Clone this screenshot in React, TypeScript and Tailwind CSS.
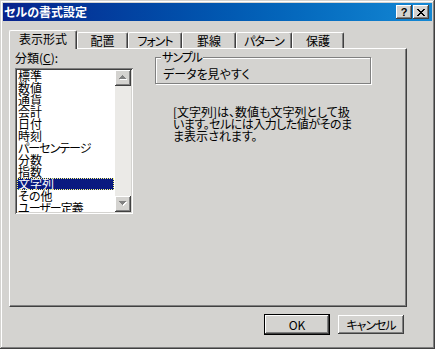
import React from "react";

const ITEMS = [
  { t: "標準" },
  { t: "数値" },
  { t: "通貨" },
  { t: "会計" },
  { t: "日付" },
  { t: "時刻" },
  { t: "パーセンテージ", kana: true },
  { t: "分数" },
  { t: "指数" },
  { t: "文字列" },
  { t: "その他" },
  { t: "ユーザー定義", kana: true },
];

const TABS = [
  { label: "表示形式", w: "w-[68px]" },
  { label: "配置", w: "w-[51px]" },
  { label: "フォント", w: "w-[54px]", kana: true },
  { label: "罫線", w: "w-[54px]" },
  { label: "パターン", w: "w-[56px]", kana: true },
  { label: "保護", w: "w-[52px]" },
];

const raised =
  "shadow-[inset_-1px_-1px_#404040,inset_1px_1px_#fff,inset_-2px_-2px_#808080]";

function Arrow({ up }: { up?: boolean }) {
  const rows = [1, 3, 5, 7];
  const rs = up ? rows : [...rows].reverse();
  return (
    <svg width="9" height="6" viewBox="0 0 9 6" shapeRendering="crispEdges">
      {rs.map((w, i) => (
        <rect key={"s" + i} x={(7 - w) / 2 + 1} y={i + 1} width={w} height={1} fill="#fff" />
      ))}
      {rs.map((w, i) => (
        <rect key={"g" + i} x={(7 - w) / 2} y={i} width={w} height={1} fill="#808080" />
      ))}
    </svg>
  );
}

function TitleButton({ children }: { children: React.ReactNode }) {
  return (
    <div className={`w-[16px] h-[14px] bg-[#d4d3d0] flex items-center justify-center ${raised}`}>
      {children}
    </div>
  );
}

export default function App() {
  return (
    <div className="w-[435px] h-[349px] bg-[#d4d3d0] flex flex-col text-[12px] leading-[12px] text-black font-['Noto_Sans_CJK_JP',sans-serif] [font-feature-settings:'palt'] shadow-[inset_-1px_-1px_#404040,inset_1px_1px_#d4d3d0,inset_-2px_-2px_#808080,inset_2px_2px_#fff]">
      {/* title bar */}
      <div className="mx-[3px] mt-[3px] h-[18px] bg-gradient-to-r from-[#08228c] to-[#1488d4] flex items-center pl-[1px] pr-[3px]">
        <span className="font-bold text-white text-[12px] leading-[12px]">セルの書式設定</span>
        <div className="ml-auto flex gap-[1px]">
          <TitleButton>
            <span className="font-['Liberation_Sans',sans-serif] font-bold text-[11px] leading-[11px]">?</span>
          </TitleButton>
          <TitleButton>
            <svg width="8" height="7" viewBox="0 0 8 7" shapeRendering="crispEdges">
              <path d="M0 0h2v1h-2zM6 0h2v1h-2zM1 1h2v1h-2zM5 1h2v1h-2zM2 2h4v1h-4zM3 3h2v1h-2zM2 4h4v1h-4zM1 5h2v1h-2zM5 5h2v1h-2zM0 6h2v1h-2zM6 6h2v1h-2z" fill="#000" />
            </svg>
          </TitleButton>
        </div>
      </div>

      {/* tabs */}
      <div className="ml-[9px] mt-[9px] h-[18px] flex items-end">
        {TABS.map((t, i) =>
          i === 0 ? (
            <div
              key={t.label}
              className={`${t.w} h-[19px] -mb-px relative z-10 bg-[#d4d3d0] border-l border-t border-r border-white border-r-[#404040] rounded-t-[2px] shadow-[inset_-1px_0_#808080] flex items-center justify-center pb-[2px]`}
            >
              {t.label}
            </div>
          ) : (
            <div
              key={t.label}
              className={`${t.w} h-[16px] bg-[#d4d3d0] border-l border-t border-r border-white border-r-[#404040] rounded-t-[2px] shadow-[inset_-1px_0_#808080] flex items-center justify-center pt-[1px] ${t.kana ? "tracking-[-1px]" : ""}`}
            >
              {t.label}
            </div>
          )
        )}
      </div>

      {/* panel */}
      <div className="ml-[9px] w-[398px] h-[259px] border-l border-t border-r border-b border-white border-r-[#404040] border-b-[#404040] shadow-[inset_-1px_-1px_#808080] flex">
        <div className="ml-[5px] mt-[3px] flex flex-col">
          <div className="h-[12px] whitespace-nowrap">
            分類(<span className="underline">C</span>):
          </div>
          <div className="mt-[4px] w-[118px] h-[146px] bg-white p-[2px] flex shadow-[inset_1px_1px_#808080,inset_-1px_-1px_#fff,inset_2px_2px_#404040,inset_-2px_-2px_#d4d3d0]">
            <div className="flex-1 overflow-hidden">
              {ITEMS.map((it) => (
                <div
                  key={it.t}
                  className={`h-[12px] pl-[1px] whitespace-nowrap ${it.kana ? "tracking-[-1px]" : ""} ${
                    it.t === "文字列"
                      ? "bg-[#0a1a80] text-white outline-dotted outline-1 -outline-offset-1 outline-[#ffff80] mr-[1px]"
                      : ""
                  }`}
                >
                  {it.t}
                </div>
              ))}
            </div>
            <div className="w-[16px] flex flex-col bg-[#ebeae7]">
              <div className={`h-[16px] bg-[#d4d3d0] flex items-center justify-center ${raised}`}>
                <Arrow up />
              </div>
              <div className="flex-1" />
              <div className={`h-[16px] bg-[#d4d3d0] flex items-center justify-center ${raised}`}>
                <Arrow />
              </div>
            </div>
          </div>
        </div>

        <div className="ml-[22px] mt-[8px] flex flex-col">
          <div className="relative w-[216px] h-[27px] border border-[#808080] shadow-[inset_1px_1px_#fff,1px_1px_#fff] pt-[10px] pl-[7px]">
            <span className="absolute left-[5px] -top-[7px] bg-[#d4d3d0] px-[1px] leading-[12px] tracking-[-1px]">サンプル</span>
            データを見やすく
          </div>
          <div className="ml-[18px] mt-[22px] whitespace-nowrap leading-[12px]">
            [文字列]は、数値も文字列として扱
            <br />
            <span className="tracking-[-0.5px]">います。セルには入力した値がそのま</span>
            <br />
            ま表示されます。
          </div>
        </div>
      </div>

      {/* buttons */}
      <div className="mt-[7px] flex items-center justify-end gap-[8px] pr-[31px]">
        <div className="w-[66px] h-[21px] border border-black bg-[#d4d3d0] flex items-center justify-center">
          <div className={`w-full h-full flex items-center justify-center ${raised}`}>OK</div>
        </div>
        <div className={`w-[66px] h-[19px] bg-[#d4d3d0] flex items-center justify-center tracking-[-1px] ${raised}`}>
          キャンセル
        </div>
      </div>
    </div>
  );
}
